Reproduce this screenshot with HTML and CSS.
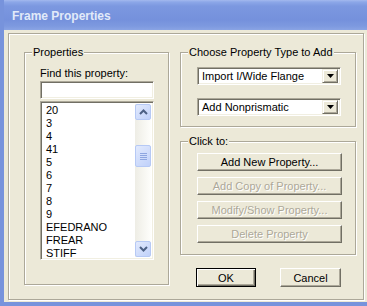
FILE: index.html
```html
<!DOCTYPE html>
<html>
<head>
    <link rel="stylesheet" href="styles.css">
</head>
<body>
    <div class="window">
        <div class="titlebar">Frame Properties</div>
        <div class="client">
            <div class="frame">
                <fieldset class="group props">
                    <legend>Properties</legend>
                    <div class="props-body">
                        <div class="find-label">Find this property:</div>
                        <input class="find" type="text">
                        <div class="listbox">
                            <ul class="items">
                                <li>20</li>
                                <li>3</li>
                                <li>4</li>
                                <li>41</li>
                                <li>5</li>
                                <li>6</li>
                                <li>7</li>
                                <li>8</li>
                                <li>9</li>
                                <li>EFEDRANO</li>
                                <li>FREAR</li>
                                <li>STIFF</li>
                            </ul>
                            <div class="vscroll">
                                <span class="sbtn">
                                    <svg width="9" height="6" viewBox="0 0 9 6"><polyline points="1,5 4.5,1.5 8,5" fill="none" stroke="#4d6185" stroke-width="2"/></svg>
                                </span>
                                <span class="track"><span class="thumb"><i></i><i></i><i></i><i></i></span></span>
                                <span class="sbtn">
                                    <svg width="9" height="6" viewBox="0 0 9 6"><polyline points="1,1 4.5,4.5 8,1" fill="none" stroke="#4d6185" stroke-width="2"/></svg>
                                </span>
                            </div>
                        </div>
                    </div>
                </fieldset>
                <div class="right">
                    <fieldset class="group type">
                        <legend>Choose Property Type to Add</legend>
                        <div class="type-body">
                            <div class="combo">
                                <span class="combo-text">Import I/Wide Flange</span>
                                <span class="drop"><svg width="7" height="4" viewBox="0 0 7 4"><polygon points="0,0 7,0 3.5,4" fill="#000"/></svg></span>
                            </div>
                            <div class="combo">
                                <span class="combo-text">Add Nonprismatic</span>
                                <span class="drop"><svg width="7" height="4" viewBox="0 0 7 4"><polygon points="0,0 7,0 3.5,4" fill="#000"/></svg></span>
                            </div>
                        </div>
                    </fieldset>
                    <fieldset class="group actions">
                        <legend>Click to:</legend>
                        <div class="actions-body">
                            <button class="btn">Add New Property...</button>
                            <button class="btn" disabled>Add Copy of Property...</button>
                            <button class="btn" disabled>Modify/Show Property...</button>
                            <button class="btn" disabled>Delete Property</button>
                        </div>
                    </fieldset>
                    <div class="dialog-btns">
                        <button class="btn ok">OK</button>
                        <button class="btn cancel">Cancel</button>
                    </div>
                </div>
            </div>
        </div>
    </div>
</body>
</html>
```
FILE: styles.css
```css
* {
    box-sizing: border-box;
}
body {
    margin: 0;
    font-family: "Liberation Sans", Arial, sans-serif;
    font-size: 11px;
    color: #000;
    background: #fff;
}
.window {
    width: 367px;
    height: 306px;
    display: flex;
    flex-direction: column;
    background: #ece9d8;
    border-left: 4px solid #7793dc;
    border-bottom: 4px solid #7793dc;
    overflow: hidden;
}
.titlebar {
    height: 30px;
    margin-left: -4px;
    padding: 2px 0 0 12px;
    display: flex;
    align-items: center;
    background: linear-gradient(#a3b9ee 0, #8ca7e8 2px, #7c98e0 6px, #7591dc 20px, #7d99df 26px, #8aa4e4 30px);
    color: #e2eaf9;
    font-weight: bold;
    font-size: 12px;
}
.client {
    flex: 1;
    padding: 3px 0 0 4px;
}
.frame {
    width: 356px;
    height: 267px;
    display: flex;
    gap: 11px;
    padding: 11px 7px 0 15px;
    border: 1px solid #aca899;
    box-shadow: inset 1px 1px 0 #fff, 1px 1px 0 #fff;
}
.group {
    margin: 0;
    padding: 0;
    min-width: 0;
    border: 1px solid #aca899;
    box-shadow: inset 1px 1px 0 #fff, 1px 1px 0 #fff;
}
.group legend {
    margin-left: 7px;
    padding: 0 1px;
    line-height: 14px;
    background: #ece9d8;
}
.props {
    width: 145px;
    height: 240px;
}
.props-body {
    padding: 7px 0 0 15px;
}
.find-label {
    line-height: 14px;
    margin-bottom: 1px;
}
.find,
.listbox,
.combo {
    display: block;
    width: 114px;
    background: #fff;
    border: 1px solid;
    border-color: #aca899 #fff #fff #aca899;
    box-shadow: inset 1px 1px 0 #716f64, inset -1px -1px 0 #f1efe2;
}
.find {
    height: 18px;
    margin: 0 0 2px;
    padding: 0;
    outline: none;
}
.listbox {
    height: 159px;
    display: flex;
    padding: 2px;
    overflow: hidden;
}
.items {
    flex: 1;
    list-style: none;
    margin: 0;
    padding: 0 0 0 3px;
}
.items li {
    line-height: 13px;
    height: 13px;
}
.vscroll {
    width: 16px;
    display: flex;
    flex-direction: column;
    background: linear-gradient(90deg, #eeede5, #fefefb);
}
.sbtn,
.thumb {
    display: flex;
    align-items: center;
    justify-content: center;
    border: 1px solid #b6c9f5;
    border-radius: 2px;
    background: linear-gradient(135deg, #e2eafd, #c0d1fa);
}
.sbtn {
    height: 16px;
}
.track {
    flex: 1;
}
.thumb {
    margin-top: 25px;
    height: 22px;
    flex-direction: column;
    gap: 1px;
}
.thumb i {
    display: block;
    width: 7px;
    height: 1px;
    background: #8ea6e0;
}
.right {
    width: 176px;
    display: flex;
    flex-direction: column;
}
.type {
    height: 82px;
}
.type-body {
    padding: 8px 0 0 16px;
}
.combo {
    width: 144px;
    height: 18px;
    display: flex;
    align-items: center;
    padding: 2px;
}
.combo + .combo {
    margin-top: 13px;
}
.combo-text {
    flex: 1;
    padding-left: 2px;
}
.drop {
    width: 16px;
    height: 14px;
    display: flex;
    align-items: center;
    justify-content: center;
    background: #ece9d8;
    border: 1px solid;
    border-color: #f1efe2 #716f64 #716f64 #f1efe2;
    box-shadow: inset 1px 1px 0 #fff, inset -1px -1px 0 #aca899;
}
.actions {
    margin-top: 7px;
    height: 121px;
}
.actions-body {
    padding: 5px 0 0 16px;
    display: flex;
    flex-direction: column;
    gap: 6px;
}
.btn {
    width: 145px;
    height: 18px;
    padding: 0;
    font: inherit;
    color: #000;
    background: #ece9d8;
    border: 1px solid;
    border-color: #fff #716f64 #716f64 #fff;
    box-shadow: inset -1px -1px 0 #aca899;
}
.btn:disabled {
    color: #aca899;
    text-shadow: 1px 1px 0 #fff;
}
.dialog-btns {
    margin-top: 13px;
    padding-left: 16px;
    display: flex;
    gap: 24px;
}
.dialog-btns .btn {
    height: 19px;
}
.ok {
    width: 60px;
    border-color: #000;
    box-shadow: inset 1px 1px 0 #fff, inset -1px -1px 0 #716f64, inset -2px -2px 0 #aca899;
}
.cancel {
    width: 61px;
}
```
